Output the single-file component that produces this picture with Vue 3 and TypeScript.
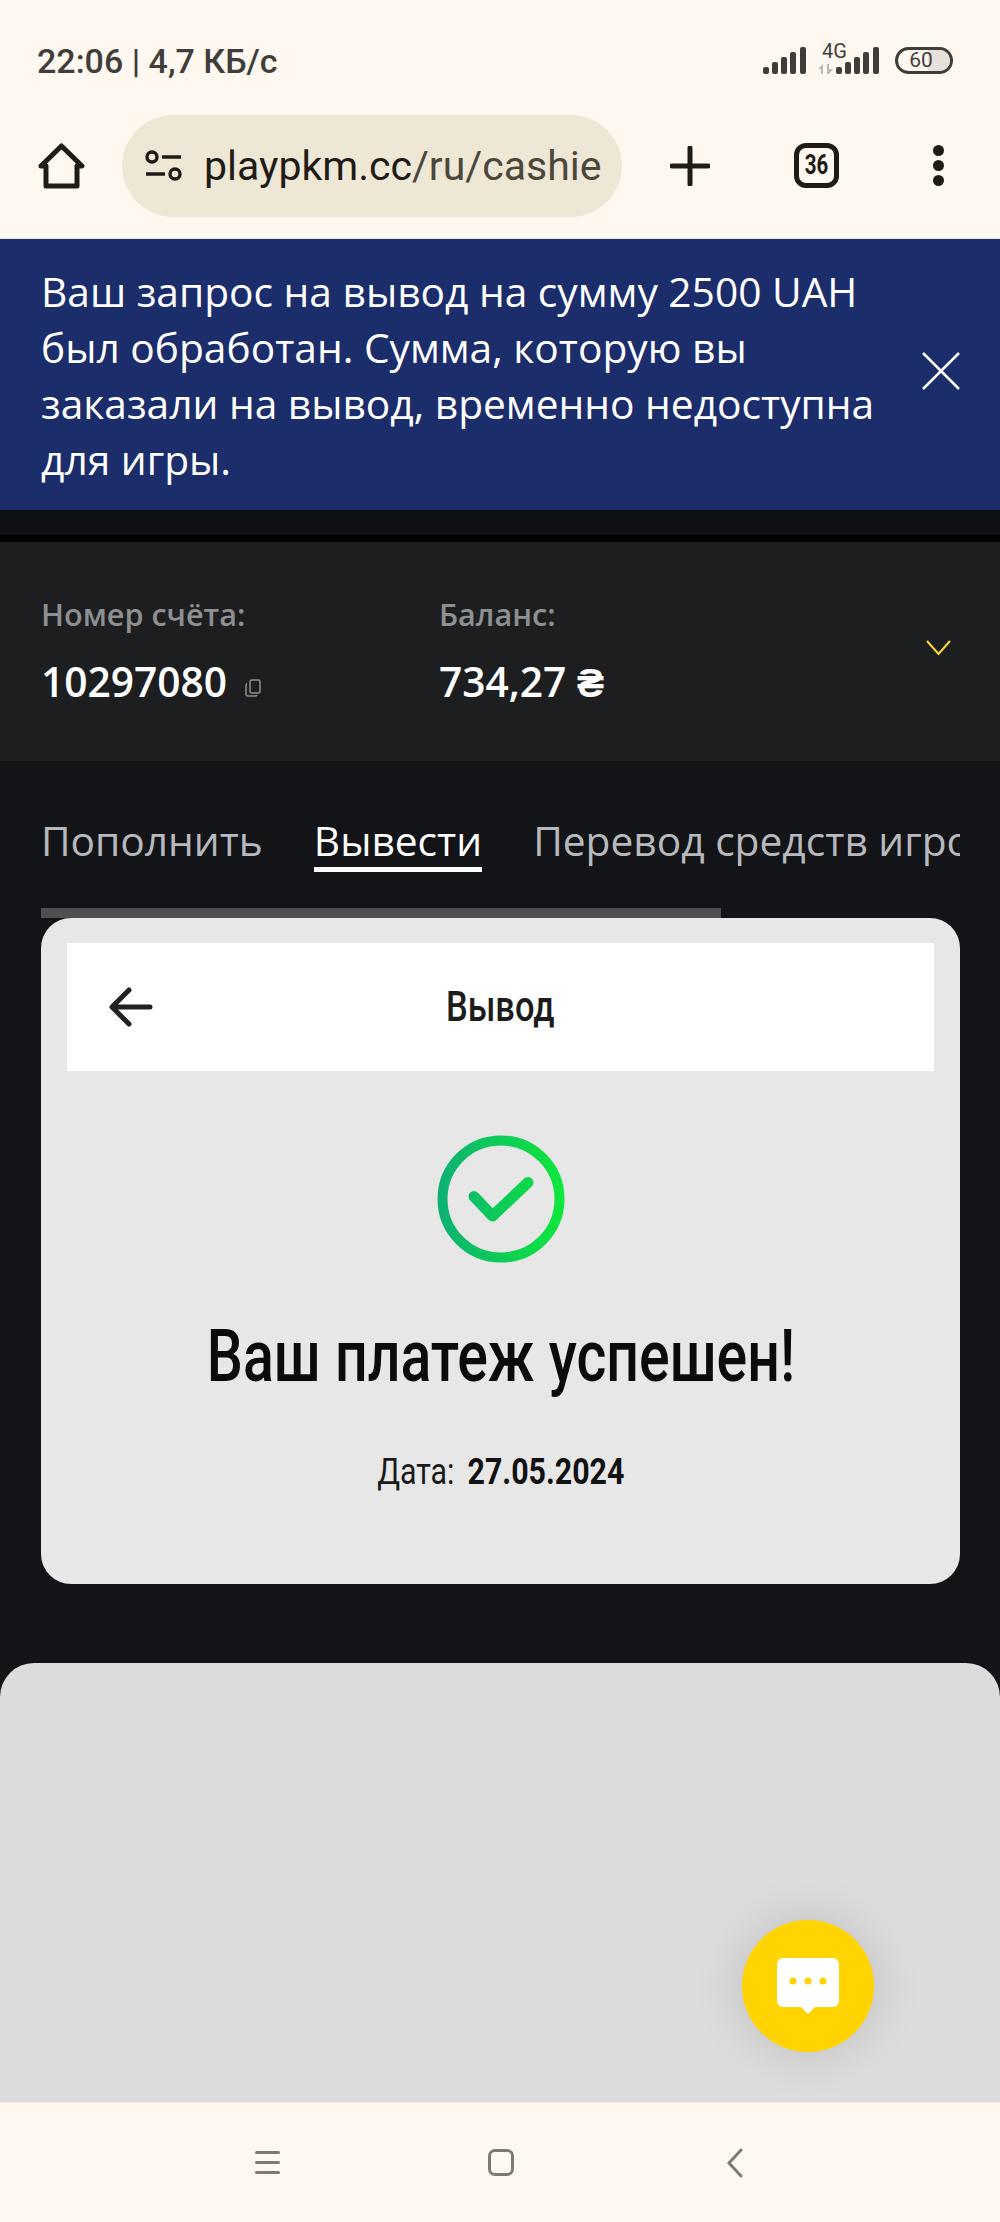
<script setup lang="ts">
// Mobile browser screenshot: cashier page, withdrawal success state.
const tabs = [
  { label: "Пополнить", active: false },
  { label: "Вывести", active: true },
  { label: "Перевод средств игроку", active: false },
];
const navBars = [0, 1, 2];
</script>

<template>
  <div class="phone">
    <header class="chrome">
      <div class="status">
        <span class="clock">22:06 | 4,7 КБ/с</span>
        <div class="indicators">
          <svg width="43" height="27" viewBox="0 0 43 27" fill="#3f3d3a">
            <rect x="0" y="20" width="6" height="7" rx="2" />
            <rect x="9" y="15" width="6" height="12" rx="2" />
            <rect x="18" y="10" width="6" height="17" rx="2" />
            <rect x="27" y="5" width="6" height="22" rx="2" />
            <rect x="37" y="0" width="6" height="27" rx="2" />
          </svg>
          <div class="net">
            <span class="net-label">4G</span>
            <svg width="16" height="10" viewBox="0 0 16 10" fill="#bdbab5">
              <path d="M0 5 5 0v10H3V5zM9 0h2v5h4l-4 5H9z" />
            </svg>
          </div>
          <svg width="43" height="27" viewBox="0 0 43 27" fill="#3f3d3a">
            <rect x="0" y="20" width="6" height="7" rx="2" />
            <rect x="9" y="15" width="6" height="12" rx="2" />
            <rect x="18" y="10" width="6" height="17" rx="2" />
            <rect x="27" y="5" width="6" height="22" rx="2" />
            <rect x="37" y="0" width="6" height="27" rx="2" />
          </svg>
          <div class="battery"><span class="battery-fill"></span><span class="battery-num">60</span></div>
        </div>
      </div>
      <div class="toolbar">
        <svg class="home" width="47" height="46" viewBox="0 0 47 46" fill="none" stroke="#1f1b16" stroke-width="5" stroke-linejoin="round">
          <path d="M3 23 23.500 3 44 23h-5v20H8V23z" />
        </svg>
        <div class="url">
          <svg width="37" height="31" viewBox="0 0 37 31" fill="none" stroke="#1f1b16" stroke-width="3.4">
            <circle cx="7" cy="7" r="5" />
            <path d="M17 7h19M1 24h19" />
            <circle cx="30" cy="24" r="5" />
          </svg>
          <span class="url-text"><b>playpkm.cc</b>/ru/cashie</span>
        </div>
        <svg class="plus" width="40" height="40" viewBox="0 0 40 40" stroke="#1f1b16" stroke-width="5" stroke-linecap="round">
          <path d="M20 2v36M2 20h36" />
        </svg>
        <div class="tab-count"><span>36</span></div>
        <svg class="more" width="13" height="41" viewBox="0 0 13 41" fill="#1f1b16">
          <circle cx="6.500" cy="5.500" r="5.500" />
          <circle cx="6.500" cy="20.500" r="5.500" />
          <circle cx="6.500" cy="35.500" r="5.500" />
        </svg>
      </div>
    </header>

    <section class="banner">
      <p>Ваш запрос на вывод на сумму 2500 UAH был обработан. Сумма, которую вы заказали на вывод, временно недоступна для игры.</p>
      <svg width="38" height="38" viewBox="0 0 38 38" stroke="#fff" stroke-width="2.5">
        <path d="M1 1l36 36M37 1 1 37" />
      </svg>
    </section>

    <div class="strip"></div>

    <section class="account">
      <div class="acc-col acc-number">
        <span class="acc-label">Номер счёта:</span>
        <span class="acc-value">10297080
          <svg class="copy" width="17" height="18" viewBox="0 0 17 18" fill="none" stroke="#8f8f8f" stroke-width="1.5">
            <rect x="6" y="1" width="10" height="13" rx="2" />
            <path d="M3 4.500c-.7.4-1 1-1 2V15c0 1.200.8 2 2 2h7c1 0 1.600-.4 2-1" />
          </svg>
        </span>
      </div>
      <div class="acc-col">
        <span class="acc-label">Баланс:</span>
        <span class="acc-value">734,27 <span class="hryvnia">₴</span></span>
      </div>
      <svg class="chevron" width="25" height="16" viewBox="0 0 25 16" fill="none" stroke="#ffd83a" stroke-width="2">
        <path d="M1 1l11.500 13L24 1" />
      </svg>
    </section>

    <main class="content">
      <nav class="tabs">
        <span v-for="t in tabs" :key="t.label" class="tab" :class="{ active: t.active }">{{ t.label }}</span>
      </nav>
      <div class="scrollbar"></div>
      <section class="card">
        <div class="card-head">
          <svg class="back" width="44" height="40" viewBox="0 0 44 40" fill="none" stroke="#222" stroke-width="5" stroke-linecap="round" stroke-linejoin="round">
            <path d="M41 20H4M20 3 3 20l17 17" />
          </svg>
          <span class="card-title">Вывод</span>
        </div>
        <svg class="ok" width="128" height="128" viewBox="0 0 128 128" fill="none">
          <defs>
            <linearGradient id="okGrad" gradientUnits="userSpaceOnUse" x1="0" y1="64" x2="128" y2="64">
              <stop offset="0" stop-color="#0db072" />
              <stop offset="1" stop-color="#0ee83a" />
            </linearGradient>
          </defs>
          <circle cx="64" cy="64" r="58.500" stroke="url(#okGrad)" stroke-width="10" />
          <path d="M37 61.500 55.500 81 91 47.500" stroke="url(#okGrad)" stroke-width="11" stroke-linecap="round" stroke-linejoin="round" />
        </svg>
        <h1 class="success">Ваш платеж успешен!</h1>
        <div class="date"><span>Дата:</span><b>27.05.2024</b></div>
      </section>
      <section class="sheet">
        <button class="chat">
          <svg width="62" height="56" viewBox="0 0 62 56">
            <path d="M6 0h50a6 6 0 0 1 6 6v37a6 6 0 0 1-6 6H38l-7 7-7-7H6a6 6 0 0 1-6-6V6a6 6 0 0 1 6-6z" fill="#fff" />
            <circle cx="16" cy="23" r="3.500" fill="#ffd400" />
            <circle cx="31" cy="23" r="3.500" fill="#ffd400" />
            <circle cx="46" cy="23" r="3.500" fill="#ffd400" />
          </svg>
        </button>
      </section>
    </main>

    <footer class="sysnav">
      <div class="nav-menu"><i v-for="n in navBars" :key="n"></i></div>
      <div class="nav-home"></div>
      <svg width="16" height="30" viewBox="0 0 16 30" fill="none" stroke="#7d7a76" stroke-width="3" stroke-linecap="round">
        <path d="M14 2 2 15l12 13" />
      </svg>
    </footer>
  </div>
</template>

<style>
html, body { margin: 0; background: #121418; }
</style>

<style scoped>
.phone {
  width: 1000px;
  height: 2222px;
  display: flex;
  flex-direction: column;
  overflow: hidden;
  background: #121418;
  font-family: "Open Sans", sans-serif;
}

.chrome {
  height: 239px;
  flex-shrink: 0;
  background: #fff8f1;
  border-bottom: 1px solid #e4dfe0;
  box-sizing: border-box;
}
.status {
  height: 115px;
  display: flex;
  justify-content: space-between;
  align-items: flex-start;
  padding: 44px 47px 0 37px;
  box-sizing: border-box;
}
.clock {
  font: 500 34px/34px Roboto, sans-serif;
  color: #403e3b;
}
.indicators {
  display: flex;
  align-items: flex-end;
  height: 30px;
  margin-top: 0;
}
.net {
  width: 18px;
  display: flex;
  flex-direction: column;
  align-items: flex-start;
  margin-left: 12px;
}
.net-label {
  font: 20px/20px Roboto, sans-serif;
  color: #403e3b;
  margin: -4px 0 3px 4px;
  white-space: nowrap;
}
.battery {
  position: relative;
  width: 58px;
  height: 27px;
  margin: 0 0 0 16px;
  border: 3px solid #403e3b;
  border-radius: 14px;
  box-sizing: border-box;
  overflow: hidden;
}
.battery-fill {
  position: absolute;
  inset: 0 0 0 30px;
  background: #e6e1da;
}
.battery-num {
  position: relative;
  display: block;
  text-align: center;
  font: 21px/21px Roboto, sans-serif;
  color: #403e3b;
  margin-right: 6px;
}

.toolbar {
  height: 123px;
  display: flex;
  align-items: center;
  padding: 0 0 0 38px;
  margin-top: -11px;
}
.url {
  width: 500px;
  height: 102px;
  margin-left: 37px;
  border-radius: 51px;
  background: #efe7d5;
  display: flex;
  align-items: center;
  gap: 22px;
  padding-left: 23px;
  box-sizing: border-box;
  overflow: hidden;
}
.url-text {
  font: 41px Roboto, sans-serif;
  color: #4d473b;
  white-space: nowrap;
}
.url-text b { font-weight: 400; color: #1f1b16; }
.plus { margin-left: 48px; }
.tab-count {
  width: 45px;
  height: 45px;
  margin-left: 84px;
  border: 5px solid #1f1b16;
  border-radius: 12px;
  box-sizing: border-box;
  text-align: center;
  font: 700 27px/35px Roboto, sans-serif;
  color: #1f1b16;
}
.tab-count span {
  display: inline-block;
  transform: scaleX(0.76);
}
.more { margin-left: 93px; }

.banner {
  height: 271px;
  flex-shrink: 0;
  background: #1c2d6b;
  display: flex;
  align-items: center;
  padding: 0 0 0 41px;
  box-sizing: border-box;
}
.banner p {
  margin: 0;
  width: 840px;
  font-size: 40.7px;
  line-height: 56px;
  color: #fff;
}
.banner svg { margin: -8px 0 0 41px; flex-shrink: 0; }

.strip {
  height: 25px;
  flex-shrink: 0;
  background: #0e1013;
  border-bottom: 7px solid #000;
}

.account {
  height: 219px;
  flex-shrink: 0;
  background: #1d1e20;
  display: flex;
  align-items: flex-start;
  position: relative;
  padding: 52px 0 0 41px;
  box-sizing: border-box;
}
.acc-col {
  display: flex;
  flex-direction: column;
  gap: 22px;
}
.acc-number { width: 398px; }
.acc-label {
  font-size: 30.6px;
  line-height: 40px;
  font-weight: 600;
  color: #8e8f91;
}
.acc-value {
  font-size: 40.7px;
  line-height: 50px;
  font-weight: 600;
  color: #fff;
}
.hryvnia { font-family: Roboto, sans-serif; font-weight: 700; }
.copy { margin-left: 6px; }
.chevron { position: absolute; right: 49px; top: 98px; }

.content {
  flex: 1;
  display: flex;
  flex-direction: column;
  min-height: 0;
}
.tabs {
  display: flex;
  gap: 51px;
  margin: 52px 40px 0 41px;
  overflow: hidden;
  white-space: nowrap;
}
.tab {
  font-size: 40.7px;
  line-height: 54px;
  height: 59px;
  color: #b8b9bc;
  box-sizing: border-box;
}
.tab.active {
  color: #fff;
  border-bottom: 5px solid #fff;
}
.scrollbar {
  width: 680px;
  height: 10px;
  margin: 36px 0 0 41px;
  background: #4e4f51;
  flex-shrink: 0;
}

.card {
  height: 666px;
  margin: 0 40px 0 41px;
  flex-shrink: 0;
  background: #e7e7e7;
  border-radius: 30px;
  padding: 25px 26px 0;
  box-sizing: border-box;
  display: flex;
  flex-direction: column;
  align-items: center;
}
.card-head {
  align-self: stretch;
  height: 128px;
  flex-shrink: 0;
  background: #fff;
  display: flex;
  align-items: center;
  justify-content: center;
  position: relative;
}
.back { position: absolute; left: 42px; top: 44px; }
.card-title {
  font: 500 42px/1 Roboto, sans-serif;
  color: #1c1c1c;
  display: inline-block;
  transform: scaleX(0.82);
}
.ok { margin-top: 64px; flex-shrink: 0; }
.success {
  margin: 58px 0 0;
  font: 500 72px/1 Roboto, sans-serif;
  color: #0b0b0b;
  white-space: nowrap;
  transform: scaleX(0.795);
}
.date {
  margin-top: 60px;
  display: flex;
  align-items: baseline;
  gap: 16px;
  font: 400 37px/1 Roboto, sans-serif;
  color: #1a1a1a;
  transform: scaleX(0.82);
}
.date b { font-weight: 700; color: #111; }

.sheet {
  flex: 1;
  margin-top: 79px;
  background: #dcdcdc;
  border-radius: 34px 34px 0 0;
  position: relative;
  min-height: 0;
}
.chat {
  position: absolute;
  left: 742px;
  top: 257px;
  width: 132px;
  height: 132px;
  border: 0;
  padding: 0;
  border-radius: 50%;
  background: #ffd400;
  box-shadow: 0 0 50px rgba(0, 0, 0, 0.14);
  display: flex;
  align-items: center;
  justify-content: center;
}

.sysnav {
  height: 120px;
  flex-shrink: 0;
  background: #fff8f1;
  border-top: 1px solid #f2e8de;
  box-sizing: border-box;
  display: flex;
  align-items: center;
  justify-content: space-between;
  padding: 0 257px 0 255px;
}
.nav-menu {
  width: 25px;
  display: flex;
  flex-direction: column;
  gap: 7px;
}
.nav-menu i {
  height: 3px;
  background: #7d7a76;
  border-radius: 2px;
}
.nav-home {
  width: 26px;
  height: 27px;
  margin-left: -5px;
  border: 3px solid #7d7a76;
  border-radius: 7px;
  box-sizing: border-box;
}
</style>
